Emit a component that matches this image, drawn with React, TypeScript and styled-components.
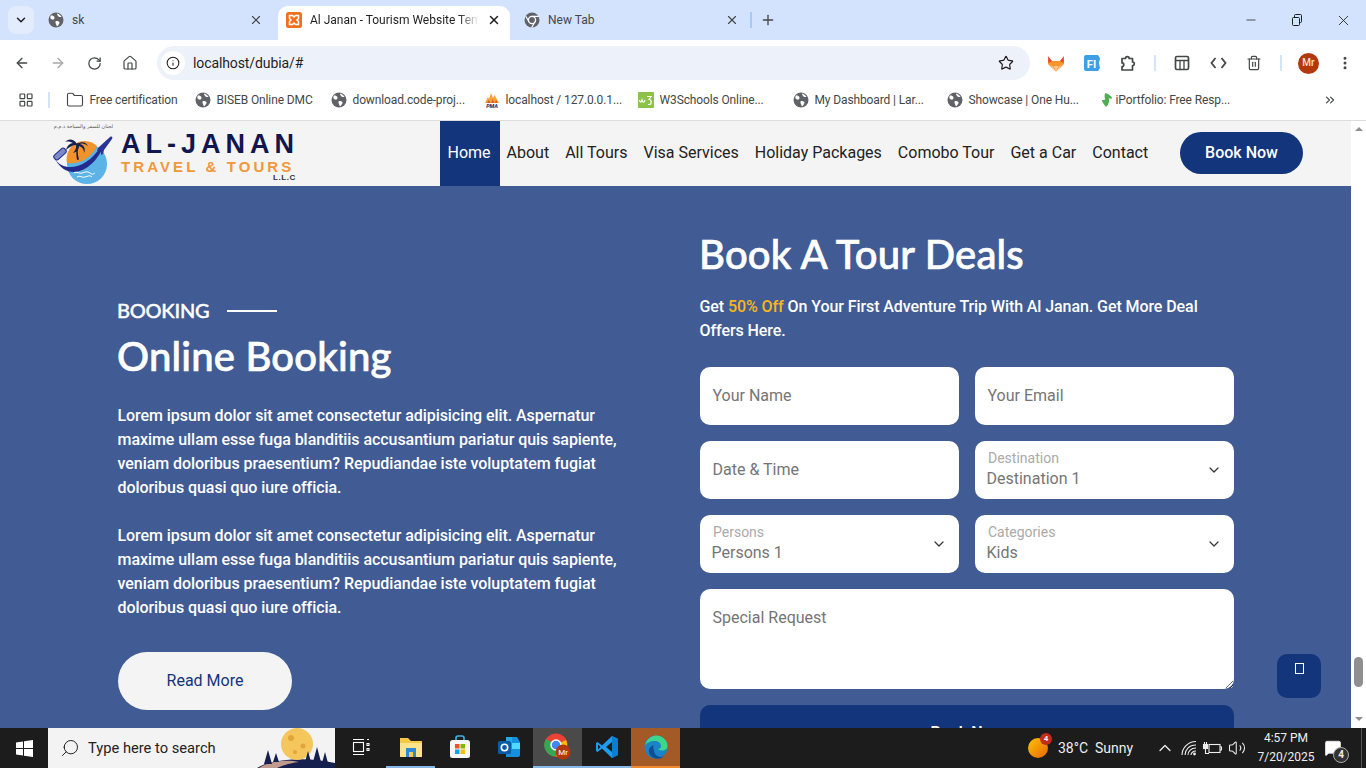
import type { ReactNode } from "react";
import styled, { createGlobalStyle } from "styled-components";
import {
  ArrowLeft, ArrowRight, RotateCw, Home, Star, Info, X, Plus, Minus, ChevronDown, ChevronUp,
  Folder, LayoutGrid, Trash2, EllipsisVertical, Search, ChevronsRight, Volume2, MessageSquare,
} from "lucide-react";

const GlobalStyle = createGlobalStyle`
  html, body { margin: 0; padding: 0; height: 100%; overflow: hidden; }
  body { font-family: Roboto, "Liberation Sans", sans-serif; }
  * { box-sizing: border-box; }
`;

const navy = "#13357b";
const heroBlue = "#415c94";
const heading = `Lato, "Open Sans", sans-serif`;

const Shell = styled.div`
  width: 1366px; height: 768px;
  display: flex; flex-direction: column;
  overflow: hidden;
`;

/* browser chrome */
const TabStrip = styled.div`
  height: 40px; flex-shrink: 0;
  display: flex; align-items: flex-end;
  background: #d3e3fd;
  padding-left: 8px;
  color: #444746;
`;

const TabSearch = styled.div`
  width: 26px; height: 28px;
  margin-bottom: 6px; margin-right: 6px;
  display: flex; align-items: center; justify-content: center;
  background: #e3ecfd;
  border-radius: 8px;
  color: #1f1f1f;
`;

const Tab = styled.div<{ $active?: boolean; $w: number; $lead?: number; $trail?: number }>`
  width: ${(p) => p.$w}px; height: 34px;
  display: flex; align-items: center; gap: 8px;
  padding: 0 ${(p) => p.$trail ?? 9}px 6px ${(p) => p.$lead ?? 8}px;
  border-radius: 10px 10px 0 0;
  background: ${(p) => (p.$active ? "#fff" : "transparent")};
  color: ${(p) => (p.$active ? "#1f1f1f" : "#444746")};
  font: 400 12px/16px Roboto, sans-serif;
`;

const TabTitle = styled.span<{ $fade?: boolean }>`
  flex: 1; min-width: 0;
  white-space: nowrap; overflow: hidden;
  ${(p) => p.$fade && `mask-image: linear-gradient(90deg, #000 88%, transparent);`}
`;

const TabDivider = styled.div`
  width: 2px; height: 16px;
  margin: 0 8px 12px 2px;
  background: #a8c7fa;
`;

const NewTab = styled.div`
  display: flex; margin-bottom: 12px;
  color: #444746;
`;

const WindowControls = styled.div`
  margin-left: auto;
  align-self: stretch;
  display: flex; align-items: center;
  color: #1f1f1f;
`;

const WindowButton = styled.div`
  width: 46px;
  display: flex; justify-content: center;
`;

const Toolbar = styled.div`
  height: 40px; flex-shrink: 0;
  display: flex; align-items: center;
  background: #fff;
  border-radius: 10px 10px 0 0;
  padding-left: 4px;
  color: #444746;
`;

const ToolButton = styled.div<{ $w?: number; $muted?: boolean }>`
  width: ${(p) => p.$w ?? 36}px; height: 32px; flex-shrink: 0;
  display: flex; align-items: center; justify-content: center;
  color: ${(p) => (p.$muted ? "#a8a8a8" : "#444746")};
`;

const Omnibox = styled.div`
  width: 873px; height: 34px;
  margin: 6px 8px 0 9px;
  display: flex; align-items: center;
  background: #edf2fa;
  border-radius: 17px;
  padding: 0 16px 0 4px;
  font: 400 14px/20px Roboto, sans-serif;
  letter-spacing: -0.1px;
  color: #1f1f1f;
`;

const InfoBubble = styled.div`
  width: 24px; height: 24px;
  display: flex; align-items: center; justify-content: center;
  margin-right: 8px;
  background: #fff;
  border-radius: 50%;
`;

const OmniText = styled.span` flex: 1; `;

const ToolSep = styled.div`
  width: 2px; height: 16px; flex-shrink: 0;
  margin: 0 8px;
  background: #d3e3fd;
`;

const Avatar = styled.div`
  width: 21px; height: 21px;
  display: flex; align-items: center; justify-content: center;
  background: #b5370e;
  border-radius: 50%;
  color: #f8e3d8;
  font: 500 10px/1 Roboto, sans-serif;
`;

const ToolRow = styled.div`
  display: flex; align-items: center;
  margin-top: 6px;
`;

const Bookmarks = styled.div`
  height: 41px; flex-shrink: 0;
  display: flex; align-items: center;
  background: #fff;
  border-bottom: 1px solid #dcdcdc;
  padding: 0 0 0 18px;
  color: #444746;
  font: 400 12px/16px Roboto, sans-serif;
  letter-spacing: -0.12px;
`;

const BarSep = styled.div`
  width: 2px; height: 16px;
  margin: 0 15.5px 0 14px;
  background: #d3e3fd;
`;

const Bookmark = styled.div<{ $w: number; $gap?: number }>`
  width: ${(p) => p.$w}px; flex-shrink: 0;
  display: flex; align-items: center; gap: ${(p) => p.$gap ?? 6}px;
  white-space: nowrap;
`;

const MoreBookmarks = styled.div`
  margin-left: auto; margin-right: 29px;
  display: flex;
`;

/* page viewport */
const Viewport = styled.div`
  position: relative;
  flex: 1; min-height: 0;
  display: flex;
`;

const Page = styled.div`
  flex: 1; min-width: 0;
  overflow: hidden;
`;

const Scrollbar = styled.div`
  width: 15px; flex-shrink: 0;
  display: flex; flex-direction: column; align-items: center;
  padding: 6px 0 7px;
  background: #fff;
`;

const ScrollArrow = styled.span<{ $down?: boolean }>`
  width: 0; height: 0;
  border-left: 4px solid transparent;
  border-right: 4px solid transparent;
  ${(p) => (p.$down ? "border-top: 4px solid #8f8f8f;" : "border-bottom: 4px solid #8f8f8f;")}
`;

const ScrollTrack = styled.div`
  flex: 1;
  display: flex; align-items: flex-end;
  padding-bottom: 30px;
`;

const ScrollThumb = styled.div`
  width: 9px; height: 30px;
  background: #8f8f8f;
  border-radius: 5px;
`;

const TopNav = styled.header`
  height: 65px;
  display: flex; align-items: stretch;
  padding: 0 48px 0 52px;
  background: #f4f4f4;
`;

const Logo = styled.div`
  width: 387.5px; flex-shrink: 0;
  display: flex; align-items: flex-end; gap: 8px;
`;

const LogoMark = styled.svg`
  width: 61px; height: 63px; flex-shrink: 0;
  margin-bottom: 2px;
`;

const LogoWords = styled.div`
  width: 176px;
  display: flex; flex-direction: column;
  margin-bottom: 4px;
`;

const LogoTitle = styled.div`
  margin-bottom: 4px;
  font: 700 27px/24px "Liberation Sans", sans-serif;
  letter-spacing: 5px;
  color: #11164f;
  white-space: nowrap;
`;

const LogoSub = styled.div`
  font: 700 15px/14px "Liberation Sans", sans-serif;
  letter-spacing: 3.1px;
  color: #f0983a;
  white-space: nowrap;
`;

const LogoLlc = styled.div`
  align-self: flex-end;
  margin-right: 1px;
  font: 700 8px/8px "Liberation Sans", sans-serif;
  letter-spacing: 0.6px;
  color: #333;
`;

const Menu = styled.nav`
  display: flex; align-items: stretch;
  font: 400 16px/24px Roboto, sans-serif;
  color: #222;
`;

const MenuItem = styled.a<{ $active?: boolean }>`
  display: flex; align-items: center;
  padding: 0 ${(p) => (p.$active ? 9 : 8)}px 2px 8px;
  margin-right: ${(p) => (p.$active ? -1 : 0)}px;
  background: ${(p) => (p.$active ? navy : "transparent")};
  color: ${(p) => (p.$active ? "#fff" : "#222")};
  text-decoration: none;
`;

const BookNow = styled.a`
  align-self: center;
  width: 123px; height: 42px;
  margin: 0 0 2px auto;
  display: flex; align-items: center; justify-content: center;
  background: ${navy};
  border-radius: 21px;
  color: #fff;
  font: 500 16px/24px Roboto, sans-serif;
`;

const Hero = styled.section`
  display: grid;
  grid-template-columns: 1fr 534px;
  padding: 44px 117px 0 118px;
  background: ${heroBlue};
  color: #fff;
`;

const LeftCol = styled.div`
  padding-top: 67.5px;
`;

const Eyebrow = styled.div`
  display: flex; align-items: center; gap: 18px;
  margin-left: -1px;
  font: 500 20px/24px ${heading};
  letter-spacing: -0.25px;
  -webkit-text-stroke: 0.4px #fff;
`;

const EyebrowRule = styled.span`
  width: 50px; height: 2px;
  margin-top: 3px;
  background: #fff;
`;

const Title = styled.h2`
  margin: 10px 0 0 -1px;
  font: 500 40px/48px ${heading};
  letter-spacing: 0.2px;
  -webkit-text-stroke: 0.7px #fff;
`;

const DealsTitle = styled(Title)`
  margin-top: 0;
`;

const Body = styled.p`
  width: 510px;
  margin: 24.5px 0 0 -0.5px;
  font: 500 16px/24px Roboto, sans-serif;
  letter-spacing: -0.06px;
  & + & { margin-top: 24px; }
`;

const ReadMore = styled.a`
  width: 174px; height: 58px;
  margin-top: 32px;
  display: flex; align-items: center; justify-content: center;
  background: #f4f4f4;
  border-radius: 29px;
  color: ${navy};
  font: 400 16px/24px Roboto, sans-serif;
`;

const RightCol = styled.div``;

const Lead = styled.p`
  margin: 17px 0 24px -0.5px;
  font: 500 16px/24px Roboto, sans-serif;
  letter-spacing: -0.08px;
  em { font-style: normal; color: #f9b61a; }
`;

const FormGrid = styled.form`
  display: grid;
  grid-template-columns: 1fr 1fr;
  gap: 16px;
`;

const TextField = styled.input`
  height: 58px; width: 100%;
  padding: 0 12.5px 2px;
  border: 0; border-radius: 10px;
  background: #fff;
  font: 400 16px/24px Roboto, sans-serif;
  outline: none;
  &::placeholder { color: #757575; }
`;

const SelectBox = styled.label`
  height: 58px;
  display: flex; align-items: center;
  padding: 0 12px;
  background: #fff;
  border-radius: 10px;
  color: #333;
`;

const SelectText = styled.span`
  flex: 1; min-width: 0;
  display: flex; flex-direction: column;
  padding-bottom: 2px;
`;

const SelectLabel = styled.span`
  padding-left: 1px;
  font: 400 14px/18px Roboto, sans-serif;
  color: #aaa;
`;

const SelectValue = styled.span`
  margin-left: -0.5px;
  margin-top: 1px;
  font: 400 16px/22px Roboto, sans-serif;
  color: #757575;
`;

const Request = styled.textarea`
  grid-column: 1 / -1;
  display: block;
  height: 100px; width: 100%;
  padding: 17px 12.5px;
  border: 0; border-radius: 10px;
  background: #fff;
  font: 400 16px/24px Roboto, sans-serif;
  outline: none;
  &::placeholder { color: #757575; }
`;

const Submit = styled.button`
  grid-column: 1 / -1;
  height: 58px;
  padding-bottom: 3px;
  border: 0; border-radius: 10px;
  background: ${navy};
  color: #fff;
  font: 600 16px/24px Roboto, sans-serif;
`;

const BackTop = styled.a`
  position: absolute;
  left: 1277px; top: 533px;
  width: 44px; height: 44px;
  display: flex; justify-content: center;
  padding-top: 9px;
  background: ${navy};
  border-radius: 10px;
`;

const MissingGlyph = styled.span`
  width: 9px; height: 11px;
  border: 1px solid #fff;
`;

/* windows taskbar */
const Taskbar = styled.footer`
  height: 40px; flex-shrink: 0;
  display: flex; align-items: stretch;
  background: #1c1c1c;
  color: #fff;
`;

const StartButton = styled.div`
  width: 48px;
  display: flex; align-items: center; justify-content: center;
`;

const SearchBox = styled.div`
  position: relative;
  width: 287px;
  display: flex; align-items: center; gap: 8px;
  padding-left: 12px;
  background: #f3f3f3;
  color: #222;
  font: 400 14.7px/20px Roboto, sans-serif;
  overflow: hidden;
`;

const SearchGlyph = styled(Search)`
  transform: scaleX(-1);
`;

const SearchArt = styled.svg`
  position: absolute; right: 0; top: 0;
  width: 90px; height: 40px;
`;

const TaskApps = styled.div`
  display: flex; align-items: stretch;
`;

const TaskSlot = styled.div<{ $bg?: string; $line?: string; $w?: number }>`
  width: ${(p) => p.$w ?? 49}px;
  display: flex; align-items: center; justify-content: center;
  background: ${(p) => p.$bg ?? "transparent"};
  border-bottom: 2px solid ${(p) => p.$line ?? "transparent"};
`;

const Tray = styled.div`
  margin-left: auto;
  display: flex; align-items: center;
  padding-right: 4px;
  font: 400 14px/18px Roboto, sans-serif;
  color: #eee;
`;

const WeatherIcon = styled.div`
  position: relative;
  width: 20px; height: 20px;
  margin-right: 10px;
  background: linear-gradient(135deg, #ffc400, #e8660b);
  border-radius: 50%;
`;

const WeatherBadge = styled.span`
  position: absolute; right: -4px; top: -5px;
  width: 12px; height: 12px;
  display: flex; align-items: center; justify-content: center;
  background: #c42b1c;
  border-radius: 50%;
  font: 700 8px/1 Roboto, sans-serif;
`;

const WeatherText = styled.span`
  width: 92px;
  white-space: pre;
`;

const TrayIcon = styled.div<{ $w: number }>`
  width: ${(p) => p.$w}px;
  display: flex; justify-content: center;
`;

const Clock = styled.div`
  width: 72px;
  text-align: center;
  font: 400 12px/19.5px Roboto, sans-serif;
`;

const Notify = styled.div`
  position: relative;
  align-self: stretch;
  width: 40px;
  display: flex; align-items: center;
  padding-left: 2px;
  border-right: 1px solid #555;
`;

const NotifyCount = styled.span`
  position: absolute; left: 11px; top: 19px;
  width: 16px; height: 16px;
  display: flex; align-items: center; justify-content: center;
  background: #333;
  border: 1px solid #aaa;
  border-radius: 50%;
  font: 700 10px/1 Roboto, sans-serif;
`;

const Globe = () => (
  <svg width="16" height="16" viewBox="0 0 16 16">
    <circle cx="8" cy="8" r="7.5" fill="#5f6368" />
    <path d="M3 3.500c2 0 3 .5 3.500 2S5 8 4 7.500 1.500 6 3 3.500zM9 1.500c2 .5 4 2 4.500 3.500-1.500 0-3 0-3.500-1s-1-1.500-1-2.500zM8 9c2 0 4 .5 3.500 2S9.500 14 9 14.500c-.5-2-2.500-4-1-5.500z" fill="#fff" />
  </svg>
);

const GrayChrome = () => (
  <svg width="16" height="16" viewBox="0 0 16 16">
    <circle cx="8" cy="8" r="7.500" fill="#5f6368" />
    <circle cx="8" cy="8" r="3.600" fill="#5f6368" stroke="#fff" strokeWidth="1.300" />
    <path d="M8 4.400h6.800M5 9.800 1.700 4.200M11 9.800l-3.300 5.700" stroke="#fff" strokeWidth="1.200" fill="none" />
  </svg>
);

const RestoreGlyph = () => (
  <svg width="12" height="12" viewBox="0 0 12 12" fill="none" stroke="currentColor" strokeWidth="1">
    <rect x="1.500" y="3.500" width="7" height="8" rx="1" />
    <path d="M3.500 3.500V1.500a1 1 0 0 1 1-1h5a1 1 0 0 1 1 1v6a1 1 0 0 1-1 1H8.500" />
  </svg>
);

const XamppMark = () => (
  <svg width="16" height="16" viewBox="0 0 16 16">
    <rect width="16" height="16" rx="2.500" fill="#f0701f" />
    <path d="M3.500 3.500h3L8 5l1.500-1.500h3v3L11 8l1.500 1.500v3h-3L8 11l-1.500 1.500h-3v-3L5 8 3.500 6.500z" fill="none" stroke="#fff" strokeWidth="1.500" />
  </svg>
);

const PmaMark = () => (
  <svg width="16" height="15" viewBox="0 0 16 15">
    <path d="M1 10 4 4l1 2 2-6 2 5 1.500-3L15 10z" fill="#f6a13c" />
    <path d="M3 10l2-3 1.500 3zM7.500 10l1-4 1.500 4zM11 10l1-3 1.500 3z" fill="#d9541e" />
    <text x="8" y="15" textAnchor="middle" fontFamily="Roboto, sans-serif" fontStyle="italic" fontWeight="900" fontSize="5.500" fill="#2d3a6e">PMA</text>
  </svg>
);

const W3Mark = () => (
  <svg width="16" height="16" viewBox="0 0 16 16">
    <rect width="16" height="16" rx="1" fill="#8bc34a" />
    <path d="M1.500 8c.5 3 1.500 3 2.500 0 1 3 2 3 3 0M9 4.500h4l-2 3c3 0 3 5 0 5h-1" fill="none" stroke="#fff" strokeWidth="1.200" />
  </svg>
);

const LeafMark = () => (
  <svg width="14" height="18" viewBox="0 0 16 18">
    <path d="M6 1c3 1 7 3 8 6-1 1-3 0-4 0 1 3 0 7-3 10-2-2-4-5-5-8 2 0 3 0 4-1C5 6 5 3 6 1z" fill="#4caf50" />
  </svg>
);

const FoxMark = () => (
  <svg width="18" height="17" viewBox="0 0 18 17">
    <path d="M1 3.500 5 6h8l4-2.500L17 9l-4 4-4 3.500L5 13 1 9z" fill="#f7962c" />
    <path d="M4 9l5 7.500L5 13zM14 9l-5 7.500 4-3.500zM9 16.500 6.500 11h5z" fill="#ffc68c" />
    <path d="M1 1l4 5-3.500 2zM17 1l-4 5 3.500 2z" fill="#e8452c" />
  </svg>
);

const FiMark = () => (
  <svg width="16" height="16" viewBox="0 0 16 16">
    <path d="M2 0h12l2 3-1 5 1 5-2 3H2a2 2 0 0 1-2-2V2a2 2 0 0 1 2-2z" fill="#3ea0e4" />
    <text x="7.500" y="12.500" textAnchor="middle" fontFamily="Roboto, sans-serif" fontWeight="700" fontSize="11" fill="#fff">FI</text>
  </svg>
);

const PuzzleGlyph = () => (
  <svg width="17" height="17" viewBox="0 0 17 17" fill="none" stroke="currentColor" strokeWidth="1.700" strokeLinejoin="round">
    <path d="M2 3.500h3.500a1.800 1.800 0 1 1 3.600 0h3.400V7a1.800 1.800 0 1 1 0 3.600v4.400H2v-3.500a1.800 1.800 0 0 0 0-3.600z" />
  </svg>
);

const PanelGlyph = () => (
  <svg width="16" height="16" viewBox="0 0 16 16" fill="none" stroke="currentColor" strokeWidth="1.700">
    <rect x="1.500" y="1.500" width="13" height="13" rx="1.500" />
    <path d="M1.500 5.500h13M6 5.500v9M10 5.500v9" strokeWidth="1.300" />
  </svg>
);

const CodeGlyph = () => (
  <svg width="17" height="12" viewBox="0 0 17 12" fill="none" stroke="currentColor" strokeWidth="1.800">
    <path d="M5.500 1 1.500 6l4 5M11.500 1l4 5-4 5" />
  </svg>
);

const WifiGlyph = () => (
  <svg width="18" height="16" viewBox="0 0 18 16" fill="none" stroke="#eee" strokeWidth="1.100">
    <path d="M1 15C1 8 7 1.500 15 1.500M4 15c0-5 4-10 11-10M7 15c0-3.500 3-7 8-7M10 15c0-2 2-4 5-4" />
    <circle cx="13.500" cy="14" r="1.400" fill="#eee" stroke="none" />
  </svg>
);

const BatteryGlyph = () => (
  <svg width="20" height="14" viewBox="0 0 20 14" fill="none" stroke="#eee" strokeWidth="1.100">
    <rect x="7" y="3.500" width="11" height="8" />
    <path d="M18 6h1.500v3H18" />
    <rect x="1.500" y="3.500" width="4" height="4" fill="#eee" />
    <path d="M2.500 1v2.500M4.500 1v2.500M3.500 7.500v5h3.500" />
  </svg>
);

const WindowsMark = () => (
  <svg width="17" height="17" viewBox="0 0 17 17" fill="#fff">
    <path d="M0 2.400 7 1.400v6.600H0zM8 1.200 17 0v8H8zM0 9h7v6.600l-7-1zM8 9h9v8l-9-1.200z" />
  </svg>
);

const TaskViewMark = () => (
  <svg width="18" height="18" viewBox="0 0 18 18" fill="none" stroke="#fff" strokeWidth="1.100">
    <rect x="1.500" y="4.500" width="10" height="9" />
    <path d="M1 1.500h11M1 16.500h11M15 1.500h2M15 5.500h2v2h-2zM15 10.500h2v2h-2z" />
  </svg>
);

const FolderApp = () => (
  <svg width="24" height="22" viewBox="0 0 24 22">
    <path d="M1 2h8l3 3h11v15a1 1 0 0 1-1 1H2a1 1 0 0 1-1-1z" fill="#f7c948" />
    <path d="M1 7h22v13a1 1 0 0 1-1 1H2a1 1 0 0 1-1-1z" fill="#fde38b" />
    <rect x="7" y="12" width="10" height="9" fill="#2f88d6" />
    <rect x="10" y="16" width="4" height="5" fill="#f7c948" />
  </svg>
);

const StoreApp = () => (
  <svg width="22" height="24" viewBox="0 0 22 24">
    <path d="M7 6V3a2 2 0 0 1 2-2h4a2 2 0 0 1 2 2v3" fill="none" stroke="#38b6e8" strokeWidth="1.600" />
    <rect x="1" y="5" width="20" height="18" rx="2.500" fill="#f5f5f5" />
    <rect x="6" y="9" width="4.500" height="4.500" fill="#f25022" />
    <rect x="11.500" y="9" width="4.500" height="4.500" fill="#7fba00" />
    <rect x="6" y="14.500" width="4.500" height="4.500" fill="#00a4ef" />
    <rect x="11.500" y="14.500" width="4.500" height="4.500" fill="#ffb900" />
  </svg>
);

const OutlookApp = () => (
  <svg width="24" height="22" viewBox="0 0 24 22">
    <path d="M9 1h11l3 5v13a2 2 0 0 1-2 2H9z" fill="#1490df" />
    <path d="M9 1h6v6H9z" fill="#28a8ea" />
    <path d="M15 7h8v6h-8z" fill="#50d9ff" />
    <rect x="1" y="5" width="13" height="13" rx="1.500" fill="#0a5ba8" />
    <circle cx="7.500" cy="11.500" r="3.200" fill="none" stroke="#fff" strokeWidth="1.600" />
  </svg>
);

const ChromeApp = () => (
  <svg width="28" height="28" viewBox="0 0 28 28">
    <circle cx="12" cy="12" r="11.500" fill="#ea4335" />
    <path d="M12 12 22 7a11.500 11.500 0 0 1-10 16.500z" fill="#fbbc04" />
    <path d="M12 12 2 6a11.500 11.500 0 0 0 10 17.500z" fill="#34a853" />
    <circle cx="12" cy="12" r="5" fill="#4285f4" stroke="#fff" strokeWidth="1.500" />
    <circle cx="19" cy="19" r="7.500" fill="#b5370e" />
    <text x="19" y="22" textAnchor="middle" fontFamily="Roboto, sans-serif" fontSize="8" fill="#fff">Mr</text>
  </svg>
);

const VsCodeApp = () => (
  <svg width="24" height="24" viewBox="0 0 24 24">
    <path d="M17 1l6 3v16l-6 3L7 13.500 2.500 17 1 16V8l1.500-1L7 10.500z" fill="#1f9cf0" />
    <path d="M17 1l6 3v16l-6 3z" fill="#0a7fd1" />
    <path d="M17 7l-6 5 6 5z" fill="#1c1c1c" />
    <path d="M3 9.500 5.500 12 3 14.500z" fill="#1c1c1c" />
  </svg>
);

const EdgeApp = () => (
  <svg width="24" height="24" viewBox="0 0 24 24">
    <circle cx="12" cy="12" r="11.500" fill="#1b84c7" />
    <path d="M1 11C2 4 8 .5 12 .5c6 0 11.500 4.500 11.500 10.500 0 3-2.500 4.500-5.500 4.500-2 0-4-.8-4-1.500 2 0 3-1 3-3 0-3-3-5-6-5-5 0-9 2-10 5z" fill="#3dd68c" />
    <path d="M10 15c0 4 3 7 7 7 1 0 2-.3 3-.8-2 1.800-5 2.800-8 2.300-5-.8-8-5-7-9 .8-2.500 3-4 5-4-1 1-1 2.700 0 4.500z" fill="#0c4f94" />
  </svg>
);

const bookmarks: { w: number; icon: ReactNode; label: string; gap?: number }[] = [
  { w: 129, icon: <Folder size={18} strokeWidth={1.500} />, label: "Free certification" },
  { w: 136, icon: <Globe />, label: "BISEB Online DMC" },
  { w: 153, icon: <Globe />, label: "download.code-proj..." },
  { w: 154, icon: <PmaMark />, label: "localhost / 127.0.0.1..." },
  { w: 155, icon: <W3Mark />, label: "W3Schools Online..." },
  { w: 154, icon: <Globe />, label: "My Dashboard | Lar..." },
  { w: 153, icon: <Globe />, label: "Showcase | One Hu..." },
  { w: 140, icon: <LeafMark />, label: "iPortfolio: Free Resp...", gap: 2 },
];

const menu = ["About", "All Tours", "Visa Services", "Holiday Packages", "Comobo Tour", "Get a Car", "Contact"];
const lorem =
  "Lorem ipsum dolor sit amet consectetur adipisicing elit. Aspernatur maxime ullam esse fuga blanditiis accusantium pariatur quis sapiente, veniam doloribus praesentium? Repudiandae iste voluptatem fugiat doloribus quasi quo iure officia.";

function Select({ label, value }: { label: string; value: string }) {
  return (
    <SelectBox>
      <SelectText>
        <SelectLabel>{label}</SelectLabel>
        <SelectValue>{value}</SelectValue>
      </SelectText>
      <ChevronDown size={16} strokeWidth={1.800} />
    </SelectBox>
  );
}

export default function App() {
  return (
    <Shell>
      <GlobalStyle />
      <TabStrip>
        <TabSearch><ChevronDown size={14} strokeWidth={2.500} /></TabSearch>
        <Tab $w={238} $trail={15}>
          <Globe />
          <TabTitle>sk</TabTitle>
          <X size={14} />
        </Tab>
        <Tab $active $w={232}>
          <XamppMark />
          <TabTitle $fade>Al Janan - Tourism Website Template</TabTitle>
          <X size={14} strokeWidth={2.500} />
        </Tab>
        <Tab $w={238} $lead={14}>
          <GrayChrome />
          <TabTitle>New Tab</TabTitle>
          <X size={14} />
        </Tab>
        <TabDivider />
        <NewTab><Plus size={16} strokeWidth={2} /></NewTab>
        <WindowControls>
          <WindowButton><Minus size={14} strokeWidth={1.300} /></WindowButton>
          <WindowButton><RestoreGlyph /></WindowButton>
          <WindowButton><X size={17} strokeWidth={1.200} /></WindowButton>
        </WindowControls>
      </TabStrip>
      <Toolbar>
        <ToolRow>
          <ToolButton><ArrowLeft size={16} strokeWidth={2} /></ToolButton>
          <ToolButton $muted><ArrowRight size={16} strokeWidth={2} /></ToolButton>
          <ToolButton><RotateCw size={15} strokeWidth={2} /></ToolButton>
          <ToolButton><Home size={16} strokeWidth={1.800} /></ToolButton>
        </ToolRow>
        <Omnibox>
          <InfoBubble><Info size={14} strokeWidth={1.800} /></InfoBubble>
          <OmniText>localhost/dubia/#</OmniText>
          <Star size={16} strokeWidth={1.800} />
        </Omnibox>
        <ToolRow>
          <ToolButton><FoxMark /></ToolButton>
          <ToolButton><FiMark /></ToolButton>
          <ToolButton><PuzzleGlyph /></ToolButton>
          <ToolSep />
          <ToolButton><PanelGlyph /></ToolButton>
          <ToolButton><CodeGlyph /></ToolButton>
          <ToolButton><Trash2 size={16} strokeWidth={1.800} /></ToolButton>
          <ToolSep />
          <ToolButton $w={37}><Avatar>Mr</Avatar></ToolButton>
          <ToolButton><EllipsisVertical size={16} strokeWidth={2.500} /></ToolButton>
        </ToolRow>
      </Toolbar>
      <Bookmarks>
        <LayoutGrid size={16} strokeWidth={1.800} />
        <BarSep />
        {bookmarks.map((b) => (
          <Bookmark key={b.label} $w={b.w} $gap={b.gap}>
            {b.icon}
            <span>{b.label}</span>
          </Bookmark>
        ))}
        <MoreBookmarks><ChevronsRight size={14} /></MoreBookmarks>
      </Bookmarks>

      <Viewport>
        <Page>
          <TopNav>
            <Logo>
              <LogoMark viewBox="0 0 61 63">
                <text x="32" y="7" textAnchor="middle" fontFamily="DejaVu Sans, sans-serif" fontSize="5" fill="#555">الجنان للسفر والسياحة ذ.م.م</text>
                <circle cx="35" cy="43" r="20" fill="#5cb3e6" />
                <path d="M15 42a18 18 0 0 1 30-17C40 36 28 44 15 42z" fill="#f0932b" />
                <path d="M25 39c-1-6-1-11 0-17l1.500.5c-1 6-1 11 .5 16z" fill="#142050" />
                <path d="M25 23c-4-6-9-5-12-2 3-1 6 0 8 1-3 0-6 3-7 7 3-3 7-5 10-5 1 2-1 6-3 8 4-1 6-4 6-7 3 1 5 3 5 7 2-4 0-8-4-9 3-1 5 0 8 2-2-4-6-5-11-2z" fill="#142050" />
                <path d="M3 38c9 14 32 10 46-13l3-1C42 50 16 62 3 38z" fill="#232c8c" />
                <path d="M47 26l11-10c2-1 3 0 2 2l-8 11-1 4-2 1v-5l-4 1 1-3z" fill="#2b3596" />
                <rect x="1" y="30" width="14" height="6" rx="2.500" transform="rotate(-42 8 33)" fill="#7a8ac9" stroke="#232c8c" />
                <path d="M22 52c3-2 5 1 8 0s5-2 8 0 3 1 5 0M25 56c3-2 5 1 8 0s5-2 7 0" fill="none" stroke="#fff" strokeWidth="1" />
              </LogoMark>
              <LogoWords>
                <LogoTitle>AL-JANAN</LogoTitle>
                <LogoSub>TRAVEL &amp; TOURS</LogoSub>
                <LogoLlc>L.L.C</LogoLlc>
              </LogoWords>
            </Logo>
            <Menu>
              <MenuItem $active>Home</MenuItem>
              {menu.map((m) => <MenuItem key={m}>{m}</MenuItem>)}
            </Menu>
            <BookNow>Book Now</BookNow>
          </TopNav>
          <Hero>
            <LeftCol>
              <Eyebrow>BOOKING <EyebrowRule /></Eyebrow>
              <Title>Online Booking</Title>
              <Body>{lorem}</Body>
              <Body>{lorem}</Body>
              <ReadMore>Read More</ReadMore>
            </LeftCol>
            <RightCol>
              <DealsTitle as="h1">Book A Tour Deals</DealsTitle>
              <Lead>Get <em>50% Off</em> On Your First Adventure Trip With Al Janan. Get More Deal Offers Here.</Lead>
              <FormGrid>
                <TextField placeholder="Your Name" />
                <TextField placeholder="Your Email" />
                <TextField placeholder="Date & Time" />
                <Select label="Destination" value="Destination 1" />
                <Select label="Persons" value="Persons 1" />
                <Select label="Categories" value="Kids" />
                <Request placeholder="Special Request" />
                <Submit type="button">Book Now</Submit>
              </FormGrid>
            </RightCol>
          </Hero>
        </Page>
        <Scrollbar>
          <ScrollArrow />
          <ScrollTrack><ScrollThumb /></ScrollTrack>
          <ScrollArrow $down />
        </Scrollbar>
        <BackTop><MissingGlyph /></BackTop>
      </Viewport>

      <Taskbar>
        <StartButton><WindowsMark /></StartButton>
        <SearchBox>
          <SearchGlyph size={20} strokeWidth={1.200} />
          <span>Type here to search</span>
          <SearchArt viewBox="0 0 90 40">
            <path d="M12 40c14-9 50-12 78-5v5z" fill="#16204f" />
            <path d="M14 40c10-7 28-9 40-6-8 1-16 3-22 6z" fill="#c09a8c" />
            <circle cx="52" cy="16" r="16" fill="#f5c65b" />
            <circle cx="46" cy="10" r="3" fill="#e0a53b" />
            <circle cx="58" cy="18" r="2.500" fill="#e0a53b" />
            <circle cx="50" cy="24" r="2" fill="#e0a53b" />
            <path d="M19 36l4-14 4 14zM28 34l3-9 3 9zM60 34l3-11 3 11zM68 34l4-15 4 15zM77 35l3-11 3 11z" fill="#16204f" />
          </SearchArt>
        </SearchBox>
        <TaskApps>
          <TaskSlot $w={51}><TaskViewMark /></TaskSlot>
          <TaskSlot $line="#86b8e8"><FolderApp /></TaskSlot>
          <TaskSlot><StoreApp /></TaskSlot>
          <TaskSlot><OutlookApp /></TaskSlot>
          <TaskSlot $bg="#4a4a4a" $line="#86b8e8"><ChromeApp /></TaskSlot>
          <TaskSlot $line="#86b8e8"><VsCodeApp /></TaskSlot>
          <TaskSlot $bg="#a35a26" $line="#f08a2c"><EdgeApp /></TaskSlot>
        </TaskApps>
        <Tray>
          <WeatherIcon><WeatherBadge>4</WeatherBadge></WeatherIcon>
          <WeatherText>38°C  Sunny</WeatherText>
          <TrayIcon $w={30}><ChevronUp size={20} strokeWidth={1.500} /></TrayIcon>
          <TrayIcon $w={20}><WifiGlyph /></TrayIcon>
          <TrayIcon $w={24}><BatteryGlyph /></TrayIcon>
          <TrayIcon $w={26}><Volume2 size={18} strokeWidth={1.400} /></TrayIcon>
          <Clock>4:57 PM<br />7/20/2025</Clock>
          <Notify>
            <MessageSquare size={18} fill="#fff" strokeWidth={1} />
            <NotifyCount>4</NotifyCount>
          </Notify>
        </Tray>
      </Taskbar>
    </Shell>
  );
}
